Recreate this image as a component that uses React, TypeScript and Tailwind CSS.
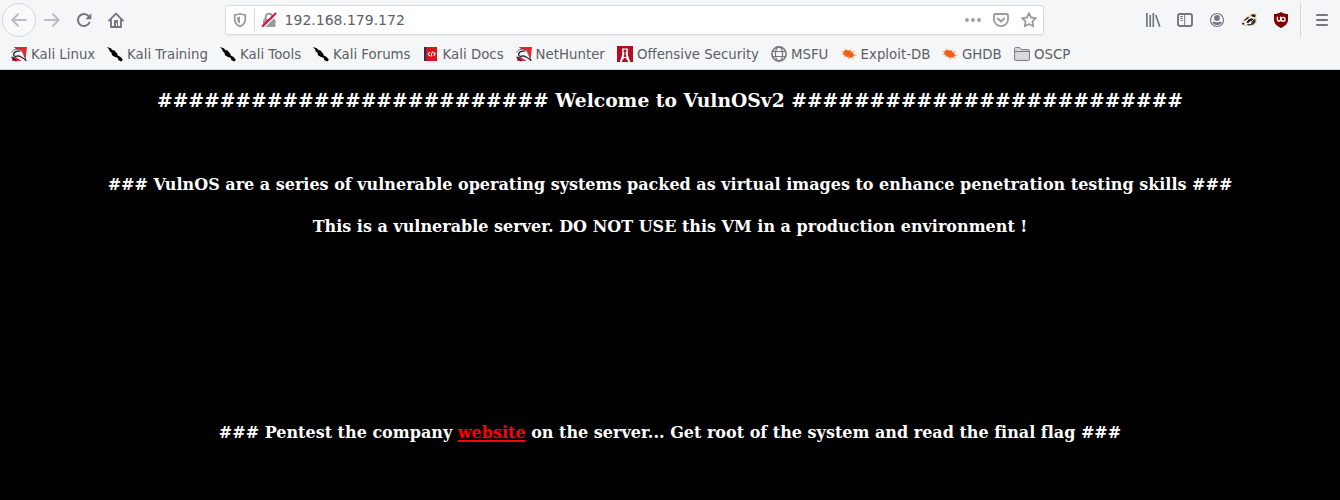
import type { ReactNode } from "react";

const Svg = ({ children, className = "" }: { children: ReactNode; className?: string }) => (
  <svg viewBox="0 0 16 16" className={`h-4 w-4 shrink-0 ${className}`} fill="none" stroke="currentColor" strokeWidth="2" strokeLinecap="round" strokeLinejoin="round">
    {children}
  </svg>
);

const Back = () => <Svg className="text-[#bdbec3]"><path d="M15 8H1.5M7 2.2 1.3 8 7 13.8" /></Svg>;
const Forward = () => <Svg className="text-[#bdbec3]"><path d="M1 8h13.5M9 2.2 14.7 8 9 13.8" /></Svg>;
const Reload = () => (
  <Svg>
    <path d="M13.400 10.600A6 6 0 1 1 12.600 4.200" />
    <path d="M15.400 1.200v5.600a.5.5 0 0 1-.5.5H9.300z" fill="currentColor" stroke="none" />
  </Svg>
);
const Home = () => (
  <Svg>
    <path d="M1 8.600 8 1.600l7 7M3 8v7h10V8" strokeWidth="1.900" />
    <path d="M6 14.500V9c0-.7.4-1 1-1h2c.6 0 1 .3 1 1v5.500H9V11H8v3.500z" fill="currentColor" stroke="none" />
  </Svg>
);
const Shield = () => (
  <Svg>
    <path d="M8 1.700c1.800.8 3.600 1.100 5.300 1.200V7c0 3.600-2 6-5.300 7.500C4.700 13 2.700 10.600 2.700 7V2.900C4.400 2.800 6.200 2.500 8 1.700z" strokeWidth="1.800" />
    <path d="M8 4.400v7.200C6 10.500 5.100 9 5.100 7V5.200C6.200 5.100 7.200 4.900 8 4.400z" fill="currentColor" stroke="none" />
  </Svg>
);
const Lock = () => (
  <Svg>
    <path d="M4.600 8V5.200a3.400 3.400 0 0 1 6.800 0V8" />
    <rect x="2" y="7" width="12.500" height="8" rx="1.500" fill="currentColor" stroke="none" />
    <path d="M3.500 15 16.500 2" stroke="#fff" strokeWidth="1.300" />
    <path d="M1.700 14 14.600 1.500" stroke="#ff0039" strokeWidth="1.900" />
  </Svg>
);
const Dots = () => (
  <Svg><g fill="currentColor" stroke="none"><circle cx="2" cy="8" r="1.900" /><circle cx="8" cy="8" r="1.900" /><circle cx="14" cy="8" r="1.900" /></g></Svg>
);
const Pocket = () => (
  <Svg>
    <path d="M2.200 2h11.600c.7 0 1.200.5 1.200 1.200v4a7 7 0 0 1-14 0v-4C1 2.500 1.500 2 2.200 2z" strokeWidth="1.800" />
    <path d="m4.800 6.600 3.200 3 3.200-3" />
  </Svg>
);
const Star = () => (
  <Svg><path d="m8 1.200 2 4.300 4.900.6-3.500 3.300.9 4.900L8 12l-4.300 2.300.9-4.900L1.100 6.100 6 5.500z" strokeWidth="1.800" /></Svg>
);
const Library = () => (
  <Svg><path d="M1.900 1v14M5.200 3v12M8.300 1v14M10.700 3l4.100 11.800" strokeWidth="1.700" strokeLinecap="butt" /></Svg>
);
const Sidebar = () => (
  <Svg><rect x="1" y="2" width="14" height="12" rx="2" strokeWidth="1.900" /><path d="M7.700 2v12M3.200 4.500h2.600M3.200 6.500h2.600M3.700 8.500h2.100" strokeWidth="1" strokeLinecap="butt" /></Svg>
);
const Account = () => (
  <Svg>
    <circle cx="8" cy="8" r="6.500" strokeWidth="1.200" />
    <circle cx="8" cy="6" r="2.900" fill="currentColor" stroke="none" />
    <path d="M3.300 10.200c1.200-.9 1.900-.5 2.700-.2.900.4 3.100.4 4 0 .8-.3 1.500-.7 2.700.2-.9 1.700-2.600 2.900-4.700 2.900s-3.800-1.200-4.700-2.900z" fill="currentColor" stroke="none" />
  </Svg>
);
const Badger = () => (
  <Svg>
    <g stroke="none">
      <path d="M.2 12 2.200 7.800 5.500 4.500l2-.6 3.200-2.400 4.800.4-.3 3.500.5 4.800-3.900 3.400-7.300.7z" fill="#efc391" />
      <path d="M1 11.500 3.200 8.200 7 5.600l4.500-2 3 2.200-.3 4.400-3 2.600-7.200.5z" fill="#fffdfa" />
      <path d="m3.800 7.400 2.800-2.200 2.200.2-2.900 2.200-3.100 1.800zM10.800 2.300l3.800.5-.6 2.600-2-.7-1.700-.5zM5.200 10.400l2.300-2.900 3.200-1.300 2 .9-2.100 1.900-1.800.5-1.600 1.800zM1 10.900l2-.2.6 1.600-1.800.4z" fill="#171b20" />
      <path d="m10.500 10 3.300-3.400.7 1.400-.1 2.600-3 2.300-1.600-.3zM5.300 12.600l3.700-.9 1.600 1.100-2 .6z" fill="#34393e" />
    </g>
  </Svg>
);
const Ublock = () => (
  <Svg>
    <path d="M8 0c2.200 1.400 4.500 2 7 2v5.500c0 4-2.600 6.300-7 8.500-4.400-2.200-7-4.500-7-8.500V2c2.500 0 4.800-.6 7-2z" fill="#800000" stroke="none" />
    <path d="M4.400 5.300v2.500c0 1.900 3.200 1.900 3.200 0V5.300" stroke="#fff" strokeWidth="1.400" />
    <circle cx="10.100" cy="7.300" r="1.900" stroke="#fff" strokeWidth="1.400" />
  </Svg>
);
const Menu = () => <Svg><path d="M2.900 3h10.200M2.900 8h10.200M2.900 13h10.200" strokeWidth="1.900" /></Svg>;

const KaliRed = () => (
  <Svg>
    <g stroke="none">
      <path d="M2.800 1H16l-1.400 12L9.500 7z" fill="#f0222f" />
      <path d="m.8 11 3.200-.5 6.500 4.500H1.300z" fill="#df2341" />
      <path d="M.8 6.600C2 3.600 6.500 2.200 10 4.200c3 2 2.500 4.800 5 9.800-2-2.400-4-2-6-3.200C6.700 9.200 5 11 3.500 10.800 2 10.400 1.300 8.700.8 6.600z" fill="#f5f5f6" />
    </g>
    <path d="M.8 6.200C2.500 2.800 7 2 10 4.300M10.300 4.800c2.300 2 2.500 5 4.700 9.300" stroke="#4b4c50" strokeWidth=".9" />
    <path d="M8.500 5.200C4.500 4.500 2 7 2.700 9.300c1 2.600 4-.5 6.500 1.200 1.700 1.200 3.700 1.500 5.600 3.900M1 11.300l4 3.500" stroke="#222429" strokeWidth="1.300" />
  </Svg>
);
const KaliKnife = () => (
  <Svg>
    <path d="m0 .9 3.800 1.300 1.900 2.100 1.500-.1 2.900 3.200.7 2.100 2.500 1.200 2.500 2.900-1.300 1.900-3-1.300-.9-2.500-2.600-.7L5 9.300l-.5-2.500-1.900-1.600L2.200 3.500z" fill="#000" stroke="none" />
  </Svg>
);
const Docs = () => (
  <Svg>
    <path d="M2 1h12v14H2z" fill="#d9151c" stroke="none" /><path d="M1 1h2v14H1z" fill="#29304f" stroke="none" />
    <path d="M6.500 6.300 5 8l1.500 1.700M10.800 6.300 12.300 8l-1.500 1.700M9.300 5.800l-1.200 4.400" stroke="#fff" strokeWidth="1.100" />
  </Svg>
);
const Offsec = () => (
  <Svg>
    <path d="M0 0h16v16H0z" fill="#ad1020" stroke="none" />
    <path d="M5.200 2.500h5.600v6.200l2.400 7.300h-1.700L8.900 12H7.100L4.500 16H2.800l2.400-7.300z" fill="#fff" stroke="none" />
    <path d="M8 3.500v7.500M6.700 5.500 8 4l1.300 1.500M6.700 10h2.600" stroke="#ad1020" strokeWidth="1.500" strokeLinecap="butt" />
  </Svg>
);
const Globe = () => (
  <Svg className="text-[#737780]"><circle cx="8" cy="8" r="7.100" strokeWidth="1.700" /><ellipse cx="8" cy="8" rx="3.600" ry="7" strokeWidth="1.200" /><path d="M1.700 5.500h12.600M1.700 10.500h12.600" strokeWidth="1.200" /></Svg>
);
const Bug = () => (
  <Svg>
    <path d="M2 6.300C3 4 5.300 3.700 7.500 4.400c2.800.4 5.400 2.500 5.800 4.900-.8 2.300-3.200 2.700-5.600 2.200C5 11 1.800 9.200 2 6.300z" fill="#f26016" stroke="none" />
    <path d="M1 5.500l2 1.300M4.500 3l1 1.500M8 4.600 10.200 3.700M10.800 6.300l2.400-.7M12.400 9l2.600.2M11.300 11l1.700 1.500M7.500 10.500l.5 2.300M4.800 9.300l-1.500 1.200M3 8l-1.900.3" stroke="#f58a52" strokeWidth=".9" />
  </Svg>
);
const Folder = () => (
  <Svg className="text-[#777a80]"><path d="M.6 13.500v-11c0-.6.3-.9.900-.9h4.200l1.700 2h7c.6 0 1 .4 1 1v8.900c0 .6-.3.900-.9.900h-13c-.6 0-.9-.3-.9-.9zM.8 5.500h14.500" fill="#d9dade" strokeWidth="1" /></Svg>
);

const bookmarks = [
  { label: "Kali Linux", icon: <KaliRed />, width: "w-[96px]" },
  { label: "Kali Training", icon: <KaliKnife />, width: "w-[113px]" },
  { label: "Kali Tools", icon: <KaliKnife />, width: "w-[93px]" },
  { label: "Kali Forums", icon: <KaliKnife />, width: "w-[109.6px]" },
  { label: "Kali Docs", icon: <Docs />, width: "w-[93px]" },
  { label: "NetHunter", icon: <KaliRed />, width: "w-[101.4px]" },
  { label: "Offensive Security", icon: <Offsec />, width: "w-[154px]" },
  { label: "MSFU", icon: <Globe />, width: "w-[69.6px]" },
  { label: "Exploit-DB", icon: <Bug />, width: "w-[101.4px]" },
  { label: "GHDB", icon: <Bug />, width: "w-[72px]" },
  { label: "OSCP", icon: <Folder />, width: "w-[80px]" },
];

function Toolbar() {
  return (
    <div className="flex h-10 items-center text-[#737780]">
      <div className="ml-[2px] flex h-[34px] w-[34px] shrink-0 items-center justify-center rounded-full border border-[#d5d6da] bg-[#f8f9fa]"><Back /></div>
      <div className="ml-2 flex gap-4"><Forward /><Reload /><Home /></div>
      <div className="ml-[101px] flex h-[30px] w-[819px] shrink-0 items-center rounded-[3px] border border-[#d9dadf] bg-white pr-[6px] pl-[6px] text-[#9a9ba1] shadow-[0_1px_3px_rgba(0,0,0,0.05)]">
        <Shield />
        <div className="ml-[6px] h-[22px] w-px bg-[#d8d9dd]" />
        <div className="ml-[6px]"><Lock /></div>
        <span className="ml-[7.6px] text-[14px] text-[#5b5f67]">192.168.179.172</span>
        <div className="ml-auto flex gap-3"><Dots /><Pocket /><Star /></div>
      </div>
      <div className="ml-[101px] flex gap-4"><Library /><Sidebar /><Account /><Badger /><Ublock /></div>
      <div className="ml-[11px] h-[34px] w-px bg-[#d5d6da]" />
      <div className="ml-[13px]"><Menu /></div>
    </div>
  );
}

export default function App() {
  return (
    <div className="flex h-[500px] w-[1340px] flex-col overflow-hidden bg-black font-['DejaVu_Sans',sans-serif]">
      <header className="h-[70px] shrink-0 border-b border-[#d2d3d5] bg-[#f5f6f8]">
        <Toolbar />
        <nav className="flex h-[29px] items-center pl-[11px]">
          {bookmarks.map(({ label, icon, width }) => (
            <a key={label} className={`flex shrink-0 items-center gap-1 text-[13.333px] whitespace-nowrap text-[#5b5f67] ${width}`}>
              {icon}<span>{label}</span>
            </a>
          ))}
        </nav>
      </header>
      <main className="pt-[19px] text-center font-['DejaVu_Serif',serif] font-bold whitespace-nowrap text-white [font-variant-ligatures:none]">
        <h3 className="text-[18.72px] leading-[22px]">######################### Welcome to VulnOSv2 #########################</h3>
        <h4 className="mt-[64px] text-[16px] leading-5">### VulnOS are a series of vulnerable operating systems packed as virtual images to enhance penetration testing skills ###</h4>
        <h4 className="mt-[22px] text-[16px] leading-5">This is a vulnerable server. DO NOT USE this VM in a production environment !</h4>
        <h4 className="mt-[186px] text-[16px] leading-5">### Pentest the company <a className="text-[#ff0000] underline decoration-2 underline-offset-2 [text-decoration-skip-ink:none]">website</a> on the server... Get root of the system and read the final flag ###</h4>
      </main>
    </div>
  );
}
